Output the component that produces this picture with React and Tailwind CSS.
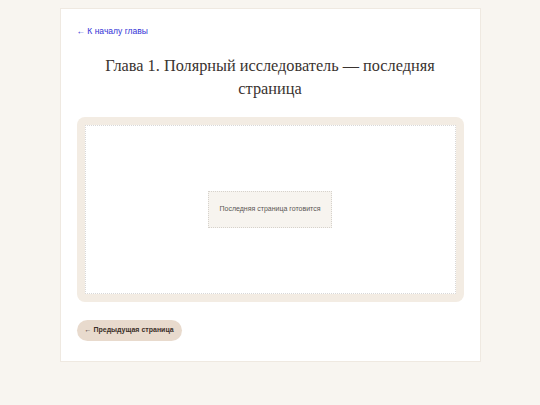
export default function App() {
  return (
    <div className="min-h-[405px] bg-[#f8f5f0] pt-2" style={{ fontFamily: '"Liberation Sans", Arial, sans-serif' }}>
      <div className="mx-auto w-[421px] bg-white border border-[#efe9e1] px-4 pt-4 pb-5">
        <a href="#" className="block text-[8.5px] leading-3 text-[#3232d6]">← К началу главы</a>

        <h1
          className="mt-[17px] text-center text-[16.3px] leading-[23px] text-[#3a3330]"
          style={{ fontFamily: '"Liberation Serif", "Times New Roman", serif' }}
        >
          Глава 1. Полярный исследователь — последняя страница
        </h1>

        <div className="mt-[17px] rounded-lg bg-[#f3ece3] p-2">
          <div className="h-[169px] bg-white border border-dotted border-[#d8d8d8] flex items-center justify-center">
            <div className="w-[124px] h-[37px] bg-[#f7f4ef] border border-dotted border-[#d6d2cc] flex items-center justify-center">
              <span className="text-[7px] text-[#5a5654]">Последняя страница готовится</span>
            </div>
          </div>
        </div>

        <button className="mt-[18px] h-[21px] px-2 rounded-full bg-[#e8dacd] text-[7px] font-bold text-[#3b2f28]">
          ← Предыдущая страница
        </button>
      </div>
    </div>
  );
}
